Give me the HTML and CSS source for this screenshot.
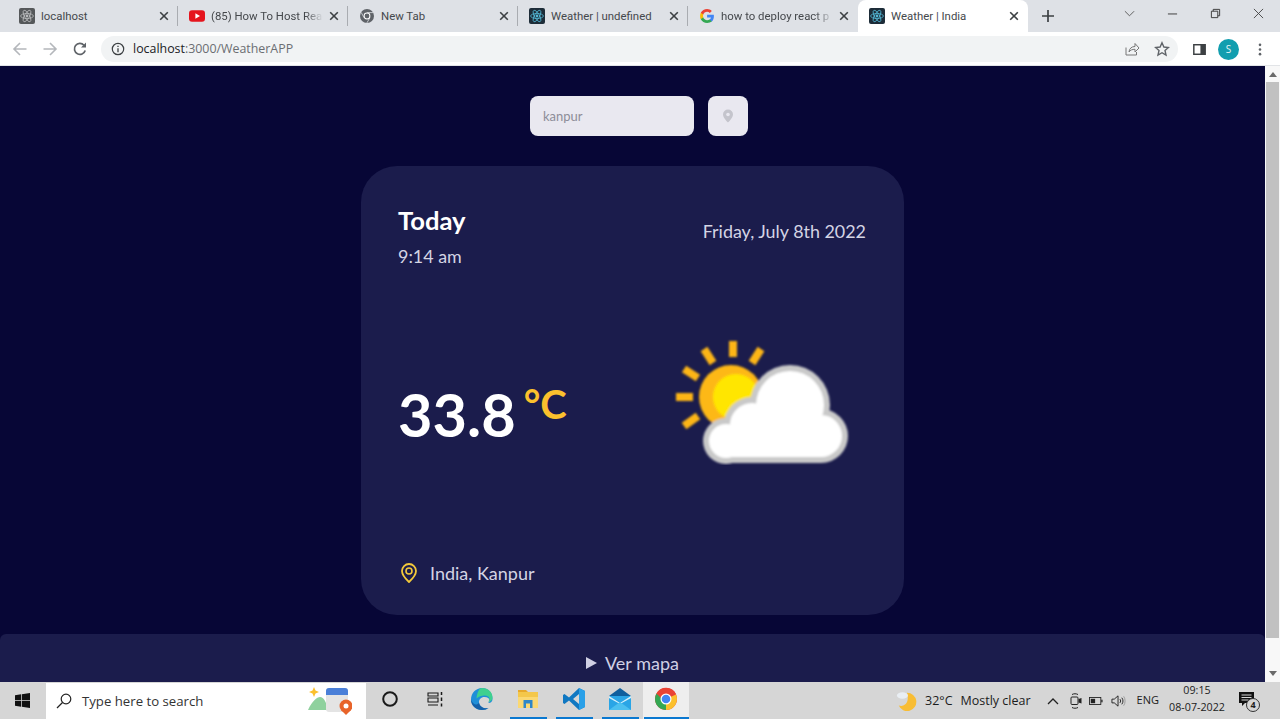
FILE: index.html
```html
<!DOCTYPE html>
<html lang="en">
<head>
<meta charset="utf-8">
<title>Weather | India</title>
<link rel="stylesheet" href="styles.css">
</head>
<body>
<svg class="defs" width="0" height="0" aria-hidden="true">
  <defs>
    <symbol id="react" viewBox="0 0 16 16">
      <rect width="16" height="16" rx="2" fill="#1d2c38"/>
      <g fill="none" stroke="#53b8d6" stroke-width=".8">
        <ellipse cx="8" cy="8" rx="6.4" ry="2.5"/>
        <ellipse cx="8" cy="8" rx="6.4" ry="2.5" transform="rotate(60 8 8)"/>
        <ellipse cx="8" cy="8" rx="6.4" ry="2.5" transform="rotate(120 8 8)"/>
      </g>
      <circle cx="8" cy="8" r="1.4" fill="#53b8d6"/>
    </symbol>
    <symbol id="x" viewBox="0 0 10 10">
      <path d="M1.2 1.2l7.6 7.6M8.8 1.2L1.2 8.8" fill="none" stroke="#3c4043" stroke-width="1.6"/>
    </symbol>
    <filter id="soft" x="-5%" y="-5%" width="110%" height="110%"><feGaussianBlur stdDeviation="1.2"/></filter>
  </defs>
</svg>

<header class="tabstrip">
  <div class="tab">
    <svg class="fav" viewBox="0 0 16 16">
      <rect width="16" height="16" rx="2" fill="#55585a"/>
      <g fill="none" stroke="#b9bbbd" stroke-width=".8"><ellipse cx="8" cy="8" rx="6.4" ry="2.5"/><ellipse cx="8" cy="8" rx="6.4" ry="2.5" transform="rotate(60 8 8)"/><ellipse cx="8" cy="8" rx="6.4" ry="2.5" transform="rotate(120 8 8)"/></g>
      <circle cx="8" cy="8" r="1.4" fill="#b9bbbd"/>
    </svg>
    <span class="tab-title">localhost</span>
    <svg class="tab-x"><use href="#x"/></svg>
  </div>
  <div class="tab">
    <svg class="fav" viewBox="0 0 16 16"><rect y="2.2" width="16" height="11.6" rx="3" fill="#e5141d"/><path d="M6.4 5.2L11 8l-4.6 2.8z" fill="#fff"/></svg>
    <span class="tab-title fade">(85) How To Host Reac</span>
    <svg class="tab-x"><use href="#x"/></svg>
  </div>
  <div class="tab">
    <svg class="fav" viewBox="0 0 16 16"><circle cx="8" cy="8" r="7" fill="#5f6368"/><circle cx="8" cy="8" r="3.4" fill="#fff"/><circle cx="8" cy="8" r="2.4" fill="#5f6368"/><path d="M8 4.6h6.2M5 9.6L2.2 4.4M10.9 9.8L7.8 15" stroke="#dee1e6" stroke-width=".8"/></svg>
    <span class="tab-title">New Tab</span>
    <svg class="tab-x"><use href="#x"/></svg>
  </div>
  <div class="tab">
    <svg class="fav"><use href="#react"/></svg>
    <span class="tab-title">Weather | undefined</span>
    <svg class="tab-x"><use href="#x"/></svg>
  </div>
  <div class="tab tab-last">
    <svg class="fav" viewBox="0 0 16 16">
      <path d="M14.9 8.2c0-.5 0-1-.1-1.4H8.1v2.7h3.9c-.2.9-.7 1.6-1.4 2.1v1.8h2.3c1.3-1.2 2-3 2-5.2z" fill="#4285f4"/>
      <path d="M8.1 15c1.9 0 3.5-.6 4.7-1.7l-2.3-1.8c-.6.4-1.4.7-2.4.7-1.8 0-3.4-1.2-3.9-2.9H1.8v1.9C3 13.500 5.400 15 8.100 15z" fill="#34a853"/>
      <path d="M4.200 9.300c-.3-.9-.3-1.800 0-2.700V4.700H1.800c-.9 1.900-.9 4.600 0 6.500z" fill="#fbbc05"/>
      <path d="M8.100 3.800c1 0 2 .4 2.700 1.100l2-2C11.600 1.700 9.900 1 8.100 1 5.400 1 3 2.500 1.800 4.700l2.400 1.900c.5-1.700 2.100-2.800 3.900-2.800z" fill="#ea4335"/>
    </svg>
    <span class="tab-title fade">how to deploy react p</span>
    <svg class="tab-x"><use href="#x"/></svg>
  </div>
  <div class="tab tab-active">
    <svg class="fav"><use href="#react"/></svg>
    <span class="tab-title">Weather | India</span>
    <svg class="tab-x"><use href="#x"/></svg>
  </div>
  <svg class="newtab" viewBox="0 0 12 12"><path d="M6 0v12M0 6h12" stroke="#3c4043" stroke-width="1.7" fill="none"/></svg>
  <div class="winctl">
    <svg viewBox="0 0 12 12"><path d="M1 3.500l5 5 5-5" fill="none" stroke="#555" stroke-width="1"/></svg>
    <svg viewBox="0 0 12 12"><path d="M1 6.500h10" stroke="#333" stroke-width="1"/></svg>
    <svg viewBox="0 0 12 12"><path d="M1.500 3.500h7v7h-7zM3.500 3.500v-2h7v7h-2" fill="none" stroke="#333" stroke-width="1"/></svg>
    <svg viewBox="0 0 12 12"><path d="M1 1l10 10M11 1L1 11" fill="none" stroke="#444" stroke-width="1"/></svg>
  </div>
</header>

<nav class="toolbar">
  <div class="navbtns">
    <svg viewBox="0 0 16 16"><path d="M14.500 8H2M8 2L2 8l6 6" fill="none" stroke="#b4b7bb" stroke-width="1.600"/></svg>
    <svg viewBox="0 0 16 16"><path d="M1.500 8H14M8 2l6 6-6 6" fill="none" stroke="#b4b7bb" stroke-width="1.600"/></svg>
    <svg viewBox="0 0 16 16"><path d="M13.200 9.500A5.500 5.500 0 1 1 12 4.200" fill="none" stroke="#5f6368" stroke-width="1.700"/><path d="M14 1.500v5H9z" fill="#5f6368"/></svg>
  </div>
  <div class="omnibox">
    <svg class="info" viewBox="0 0 14 14"><circle cx="7" cy="7" r="5.700" fill="none" stroke="#3c4043" stroke-width="1.200"/><path d="M7 6.200v4M7 3.800v1.300" stroke="#3c4043" stroke-width="1.300"/></svg>
    <span class="url"><span class="host">localhost</span>:3000/WeatherAPP</span>
    <svg class="omni-share" viewBox="0 0 16 16"><path d="M2 6.500v7.500h10.500v-3" fill="none" stroke="#777" stroke-width="1"/><path d="M5 11c.3-3.500 2.600-5.500 6-5.500V2.500L15 7l-4 4V8.300C8.300 8.300 6.300 9 5 11z" fill="none" stroke="#777" stroke-width="1"/></svg>
    <svg class="omni-star" viewBox="0 0 16 16"><path d="M8 1.800l1.900 4.200 4.500.5-3.400 3 1 4.500L8 11.700 4 14l1-4.500-3.400-3 4.500-.5z" fill="none" stroke="#5f6368" stroke-width="1.400"/></svg>
  </div>
  <svg class="sidepanel" viewBox="0 0 14 12"><rect x=".8" y=".8" width="12.400" height="10.400" fill="#fff" stroke="#3c4043" stroke-width="1.600"/><rect x="8" y="1" width="5" height="10" fill="#3c4043"/></svg>
  <span class="avatar">S</span>
  <svg class="kebab" viewBox="0 0 4 14"><circle cx="2" cy="2" r="1.400" fill="#5f6368"/><circle cx="2" cy="7" r="1.400" fill="#5f6368"/><circle cx="2" cy="12" r="1.400" fill="#5f6368"/></svg>
</nav>

<div class="viewport">
  <main class="page">
    <form class="search">
      <div class="search-input">kanpur</div>
      <button class="search-btn" type="button" aria-label="Use location">
        <svg viewBox="0 0 12 14"><path d="M6 .5A5 5 0 0 0 1 5.500C1 9 6 13.500 6 13.500S11 9 11 5.500A5 5 0 0 0 6 .5z" fill="#c4c4cc"/><circle cx="6" cy="5.500" r="1.800" fill="#e9e8f0"/></svg>
      </button>
    </form>

    <section class="card">
      <div class="card-top">
        <div>
          <h1 class="today">Today</h1>
          <p class="time">9:14 am</p>
        </div>
        <p class="date">Friday, July 8th 2022</p>
      </div>
      <div class="card-mid">
        <p class="temp">33.8<sup class="unit">°C</sup></p>
        <svg class="wx" viewBox="0 0 180 130">
          <g filter="url(#soft)">
            <path d="M59 6v16M30 14l9 14M87 14L78 28M10 34l14 9M2 62h17M10 91l14-10" stroke="#fdb515" stroke-width="8" fill="none"/>
            <circle cx="57" cy="62" r="32" fill="#fdb813"/>
            <circle cx="62" cy="62" r="23" fill="#ffe600"/>
            <g fill="#c9c9c9">
              <circle cx="116" cy="70" r="40"/>
              <circle cx="147" cy="101" r="27"/>
              <circle cx="52" cy="106" r="23"/>
              <circle cx="78" cy="90" r="28"/>
              <rect x="52" y="100" width="95" height="28"/>
            </g>
            <g fill="#fff">
              <circle cx="116" cy="70" r="34"/>
              <circle cx="147" cy="101" r="21"/>
              <circle cx="52" cy="106" r="17"/>
              <circle cx="78" cy="90" r="22"/>
              <rect x="52" y="96" width="95" height="26"/>
            </g>
          </g>
        </svg>
      </div>
      <div class="place">
        <svg viewBox="0 0 16 20"><path d="M8 1a7 7 0 0 0-7 7c0 4.500 7 11 7 11s7-6.500 7-11a7 7 0 0 0-7-7z" fill="none" stroke="#f3c93b" stroke-width="1.800"/><circle cx="8" cy="8" r="3" fill="none" stroke="#f3c93b" stroke-width="1.600"/></svg>
        <span>India, Kanpur</span>
      </div>
    </section>

    <div class="mapbar"><span class="caret"></span>Ver mapa</div>
  </main>
  <aside class="scrollbar">
    <span class="arrow-up"></span>
    <span class="thumb"></span>
    <span class="arrow-down"></span>
  </aside>
</div>

<footer class="taskbar">
  <svg class="start" viewBox="0 0 16 16"><path d="M0 2.300l6.500-.9v6.200H0zM7.300 1.300L16 0v7.600H7.300zM0 8.400h6.500v6.200L0 13.700zM7.300 8.400H16V16l-8.700-1.300z" fill="#111"/></svg>
  <div class="tb-search">
    <svg class="lens" viewBox="0 0 16 16"><circle cx="10" cy="6" r="4.800" fill="none" stroke="#222" stroke-width="1.200"/><path d="M6.500 9.500L1 15" stroke="#222" stroke-width="1.300"/></svg>
    <span>Type here to search</span>
    <svg class="news" viewBox="0 0 46 30">
      <path d="M2 24c4-9 9-13 12-13 4 0 6 5 8 13z" fill="#8fd19e"/>
      <path d="M8 1l1.500 3.500L13 6l-3.500 1.500L8 11 6.500 7.500 3 6l3.500-1.500z" fill="#fbc02d"/>
      <rect x="20" y="2" width="22" height="24" rx="3" fill="#e4e4e4"/>
      <path d="M20 9V5a3 3 0 0 1 3-3h16a3 3 0 0 1 3 3v4z" fill="#4a7fd8"/>
      <circle cx="40" cy="20" r="6.500" fill="#e8642a"/>
      <path d="M35 24l5 5 5-5z" fill="#e8642a"/>
      <circle cx="40" cy="20" r="2.500" fill="#fff"/>
    </svg>
  </div>
  <div class="apps">
    <span class="app"><svg viewBox="0 0 18 18"><circle cx="9" cy="9" r="6.800" fill="none" stroke="#1a1a1a" stroke-width="2"/></svg></span>
    <span class="app"><svg viewBox="0 0 18 18"><path d="M1 3h10v3H1zM1 8h10v4H1zM1 15h10" fill="none" stroke="#1a1a1a" stroke-width="1.100"/><path d="M14.500 2v3M14.500 7.500v3.500M14.500 13.500v3" stroke="#1a1a1a" stroke-width="1.500"/></svg></span>
    <span class="app"><svg class="big" viewBox="0 0 24 24"><path d="M12 1C6 1 1 6 1 12.500 1 18.500 6 23 12 23c2.800 0 5-1 6.500-2-4 1-9-1-9.500-5.500-.3-3 2-5.500 5.500-5.500 3 0 5 1.500 5 3.500 0 1-.5 2-1.500 2.500 2 .5 4.500-1 4.500-4C22.500 5 18 1 12 1z" fill="#1f8fd8"/><path d="M12 1c6 0 10.500 4 10.500 9.500 0 3-2.500 4.500-4.500 4 1-.5 1.500-1.500 1.500-2.500 0-2-2-3.500-5-3.500-3 0-6 1-8 3C7 6 9 1 12 1z" fill="#3fd08f"/><path d="M9 15.500C9.500 20 14.500 22 18.500 21c-1.500 1-3.700 2-6.500 2C6 23 1 18.500 1 12.500 3 18 7 19 9 15.500z" fill="#1560a8"/></svg></span>
    <span class="app open"><svg class="big" viewBox="0 0 24 24"><path d="M2 3h8l2 2H2z" fill="#e8a92b"/><path d="M2 5h20v6H2z" fill="#f4c74a"/><path d="M2 10h20v11H2z" fill="#fbd872"/><path d="M7.500 13h9v8h-2.500v-4.500h-4V21H7.500z" fill="#2e86c8"/></svg></span>
    <span class="app open"><svg class="big" viewBox="0 0 24 24"><path d="M17 1l6 3v16l-6 3L7 13.500 2.500 17 1 16v-8l1.500-1L7 10.500zM17 7l-6 5 6 5z" fill="#1078c2"/><path d="M17 1l6 3v16l-6 3z" fill="#2aa0e8"/></svg></span>
    <span class="app open"><svg class="big" viewBox="0 0 24 24"><path d="M12 1L1 9l11 7 11-7z" fill="#0f5f9e"/><path d="M1 9h22v14H1z" fill="#2aa5e6"/><path d="M1 9l11 7 11-7v2l-11 6L1 11z" fill="#d8f0fb"/><path d="M1 23l11-8 11 8z" fill="#4cc0f0"/></svg></span>
    <span class="app open active"><svg class="big" viewBox="0 0 24 24"><circle cx="12" cy="12" r="11" fill="#ea4335"/><path d="M12 12L22 7.500A11 11 0 0 1 12 23z" fill="#fbc02d"/><path d="M12 23A11 11 0 0 1 2.500 6.500L12 12z" fill="#34a853"/><path d="M2.500 6.500L8 12l4-5h10A11 11 0 0 0 2.500 6.500z" fill="#ea4335"/><circle cx="12" cy="12" r="5.500" fill="#fff"/><circle cx="12" cy="12" r="4.300" fill="#4285f4"/></svg></span>
  </div>
  <div class="tray">
    <svg class="moon" viewBox="0 0 24 24"><path d="M12 3a10 10 0 1 1-9 14c7 2 12-4 9-14z" fill="#f8bd34"/><ellipse cx="7" cy="6" rx="6" ry="3.500" fill="#e9eef3"/></svg>
    <span class="wx-temp">32°C</span>
    <span class="wx-text">Mostly clear</span>
    <svg class="chev" viewBox="0 0 12 8"><path d="M1 7l5-5 5 5" fill="none" stroke="#222" stroke-width="1.300"/></svg>
    <svg class="meet" viewBox="0 0 14 16"><rect x="2" y="4" width="7" height="7.500" rx="1" fill="none" stroke="#222" stroke-width="1"/><path d="M9.500 6l3-1v5.500l-3-1z" fill="#222"/><path d="M3 1.500c2-1 4-1 6 0M3 14.500c2 1 4 1 6 0" fill="none" stroke="#222"/></svg>
    <svg class="batt" viewBox="0 0 16 10"><rect x=".5" y="1" width="13" height="8" fill="none" stroke="#222"/><rect x="2" y="2.500" width="5" height="5" fill="#222"/><rect x="14" y="3.500" width="1.500" height="3" fill="#222"/></svg>
    <svg class="vol" viewBox="0 0 16 14"><path d="M1 5h2.500L7.500 1.500v11L3.500 9H1z" fill="none" stroke="#222"/><path d="M9.500 5c1 1.200 1 2.800 0 4M11.500 3.500c1.700 2 1.700 5 0 7" fill="none" stroke="#222"/><path d="M13.500 2c2 2.800 2 7.200 0 10" fill="none" stroke="#999"/></svg>
    <span class="lang">ENG</span>
    <div class="clock"><span>09:15</span><span>08-07-2022</span></div>
    <span class="notify">
      <svg viewBox="0 0 16 16"><path d="M0 0h15v11H6l-3 3v-3H0z" fill="#111"/><path d="M2.500 3h10M2.500 5.500h10M2.500 8h7" stroke="#d6d6d6"/></svg>
      <span class="badge">4</span>
    </span>
  </div>
</footer>
</body>
</html>
```

FILE: styles.css
```css
* { box-sizing: border-box; }
html, body { margin: 0; height: 100%; }
body {
  width: 1280px;
  height: 719px;
  overflow: hidden;
  display: flex;
  flex-direction: column;
  font-family: "Open Sans", "Noto Sans", sans-serif;
  background: #070636;
}
.defs { position: absolute; }
p, h1 { margin: 0; }

/* browser tabs */
.tabstrip {
  height: 32px;
  flex: none;
  display: flex;
  align-items: stretch;
  padding-left: 8px;
  background: #dee1e6;
}
.tab {
  width: 170px;
  flex: none;
  display: flex;
  align-items: center;
  gap: 6px;
  padding: 0 9px 0 11px;
  position: relative;
}
.tab::after {
  content: "";
  position: absolute;
  right: 0;
  top: 6px;
  height: 20px;
  width: 1px;
  background: #a9acb1;
}
.tab-last::after, .tab-active::after { display: none; }
.tab-active {
  background: #fff;
  border-radius: 8px 8px 0 0;
}
.fav { width: 16px; height: 16px; flex: none; }
.tab-title {
  flex: 1;
  min-width: 0;
  font-family: Roboto, "Open Sans", sans-serif;
  font-size: 11.4px;
  color: #45484c;
  white-space: nowrap;
}
.fade {
  -webkit-mask-image: linear-gradient(90deg, #000 84%, transparent 100%);
  mask-image: linear-gradient(90deg, #000 84%, transparent 100%);
}
.tab-x { width: 10px; height: 10px; flex: none; }
.newtab { width: 12px; height: 12px; align-self: center; margin-left: 14px; flex: none; }
.winctl {
  margin-left: auto;
  display: flex;
  align-self: flex-start;
  height: 27px;
}
.winctl svg { width: 43px; height: 27px; padding: 8px 16px; }

/* toolbar */
.toolbar {
  height: 34px;
  flex: none;
  display: flex;
  align-items: center;
  padding: 1px 0 0 5px;
  background: #fff;
  border-bottom: 1px solid #e2e4e7;
}
.navbtns { display: flex; }
.navbtns svg { width: 30px; height: 16px; }
.omnibox {
  width: 1077px;
  height: 26px;
  margin-left: 6px;
  display: flex;
  align-items: center;
  padding: 0 8px 0 10px;
  border-radius: 13px;
  background: #f1f3f4;
}
.info { width: 14px; height: 14px; flex: none; }
.url { margin-left: 8px; padding-bottom: 2px; font-size: 12.4px; color: #6b6e72; }
.host { color: #202124; }
.omni-share { width: 16px; height: 16px; margin-left: auto; }
.omni-star { width: 16px; height: 16px; margin-left: 14px; }
.sidepanel { width: 13px; height: 11px; margin-left: 15px; flex: none; }
.avatar {
  width: 21px;
  height: 21px;
  margin-left: 12px;
  border-radius: 50%;
  background: #129eaf;
  color: #e6f5f7;
  font-size: 10px;
  display: flex;
  align-items: center;
  justify-content: center;
  flex: none;
}
.kebab { width: 4px; height: 13px; margin-left: 19px; flex: none; }

/* page viewport */
.viewport {
  flex: 1;
  min-height: 0;
  display: flex;
}
.page {
  flex: 1;
  min-width: 0;
  display: flex;
  flex-direction: column;
  align-items: center;
  padding-top: 30px;
  background: #070636;
  font-family: Lato, "Open Sans", sans-serif;
}
.scrollbar {
  width: 15px;
  flex: none;
  display: flex;
  flex-direction: column;
  align-items: center;
  background: #f8f8f8;
  padding: 6px 0 6px;
}
.arrow-up, .arrow-down { width: 0; height: 0; border: 4px solid transparent; flex: none; }
.arrow-up { border-top: 0; border-bottom: 5px solid #6a6a6a; }
.arrow-down { border-bottom: 0; border-top: 5px solid #6a6a6a; margin-top: auto; }
.thumb { width: 13px; height: 556px; margin-top: 5px; background: #c1c1c1; flex: none; }

/* search */
.search { display: flex; gap: 14px; flex: none; margin-left: 13px; }
.search-input {
  width: 164px;
  height: 40px;
  padding-left: 13px;
  display: flex;
  align-items: center;
  border-radius: 8px;
  background: #e9e8f0;
  font-size: 13px;
  color: #8d8d98;
}
.search-btn {
  width: 40px;
  height: 40px;
  padding: 0;
  border: 0;
  border-radius: 8px;
  background: #e9e8f0;
  display: flex;
  align-items: center;
  justify-content: center;
}
.search-btn svg { width: 12px; height: 14px; }

/* weather card */
.card {
  width: 543px;
  height: 449px;
  margin-top: 30px;
  flex: none;
  padding: 39px 38px 30px 37px;
  display: flex;
  flex-direction: column;
  border-radius: 36px;
  background: #1b1c4c;
  color: #d4d4e4;
}
.card-top { display: flex; justify-content: space-between; align-items: flex-start; }
.today { font-size: 25.6px; line-height: 31px; font-weight: 700; color: #fff; }
.time { margin-top: 9px; font-size: 17.9px; line-height: 22px; }
.date { margin-top: 15px; font-size: 17.9px; line-height: 22px; }
.card-mid {
  flex: 1;
  display: flex;
  justify-content: space-between;
  align-items: flex-start;
  padding-top: 68px;
}
.temp {
  margin: 43px 0 0 0;
  font-size: 59.5px;
  line-height: 72px;
  font-weight: 700;
  color: #fff;
  white-space: nowrap;
}
.unit {
  margin-left: 8px;
  font-size: 40px;
  line-height: 0;
  font-weight: 700;
  color: #fbc02d;
  vertical-align: 18px;
}
.wx { width: 180px; height: 130px; margin-right: 12px; }
.place {
  display: flex;
  align-items: center;
  gap: 13px;
  margin-left: 3px;
  font-size: 18px;
  line-height: 24px;
}
.place svg { width: 16px; height: 20px; }

/* map bar */
.mapbar {
  align-self: stretch;
  flex: 1;
  margin-top: 19px;
  padding-top: 17px;
  display: flex;
  justify-content: center;
  align-items: flex-start;
  gap: 8px;
  border-radius: 6px 6px 0 0;
  background: #1b1c4c;
  color: #d0d0e4;
  font-size: 18px;
  line-height: 24px;
}
.caret {
  width: 0;
  height: 0;
  margin-top: 6px;
  border-left: 11px solid #d0d0e4;
  border-top: 6px solid transparent;
  border-bottom: 6px solid transparent;
}

/* windows taskbar */
.taskbar {
  height: 37px;
  flex: none;
  display: flex;
  align-items: center;
  background: #d6d6d6;
  font-family: "Open Sans", "Noto Sans", sans-serif;
  color: #1c1c1c;
}
.start { width: 15px; height: 15px; margin-left: 15px; flex: none; }
.tb-search {
  width: 320px;
  height: 36px;
  margin: 1px 0 0 16px;
  padding: 0 14px 0 10px;
  display: flex;
  align-items: center;
  background: #fff;
  font-size: 13.2px;
  color: #333;
}
.lens { width: 16px; height: 16px; margin-right: 10px; flex: none; }
.news { width: 46px; height: 30px; margin-left: auto; flex: none; }
.apps { display: flex; align-self: stretch; margin-left: 1px; }
.app {
  width: 46px;
  position: relative;
  display: flex;
  align-items: center;
  justify-content: center;
  padding-bottom: 4px;
}
.app svg { width: 18px; height: 18px; }
.app svg.big { width: 24px; height: 24px; }
.app.open::after {
  content: "";
  position: absolute;
  left: 5px;
  right: 4px;
  bottom: 0;
  height: 2px;
  background: #0a78d0;
}
.app.active { background: #eeeeee; }
.app.active::after { left: 1px; right: 0; }
.tray { flex: 1; display: flex; align-items: center; }
.moon { width: 22px; height: 22px; margin-left: 207px; flex: none; }
.wx-temp { margin-left: 7px; font-size: 12.5px; }
.wx-text { margin-left: 8px; font-size: 12.5px; }
.chev { width: 12px; height: 8px; margin-left: 16px; }
.meet { width: 14px; height: 16px; margin-left: 10px; }
.batt { width: 14px; height: 10px; margin-left: 6px; }
.vol { width: 15px; height: 14px; margin-left: 8px; }
.lang { margin-left: 11px; padding-bottom: 2px; font-size: 11px; }
.clock {
  width: 62px;
  flex: none;
  margin-left: 7px;
  padding-bottom: 4px;
  display: flex;
  flex-direction: column;
  align-items: center;
  font-size: 10.7px;
  line-height: 17px;
  white-space: nowrap;
}
.notify { position: relative; width: 22px; height: 20px; margin-left: 9px; flex: none; }
.notify svg { width: 16px; height: 16px; position: absolute; left: 2px; top: 1px; }
.badge {
  position: absolute;
  left: 9px;
  top: 7px;
  width: 14px;
  height: 14px;
  border: 1px solid #333;
  border-radius: 50%;
  background: #d6d6d6;
  font-size: 9px;
  font-weight: 700;
  line-height: 12px;
  text-align: center;
}
```
